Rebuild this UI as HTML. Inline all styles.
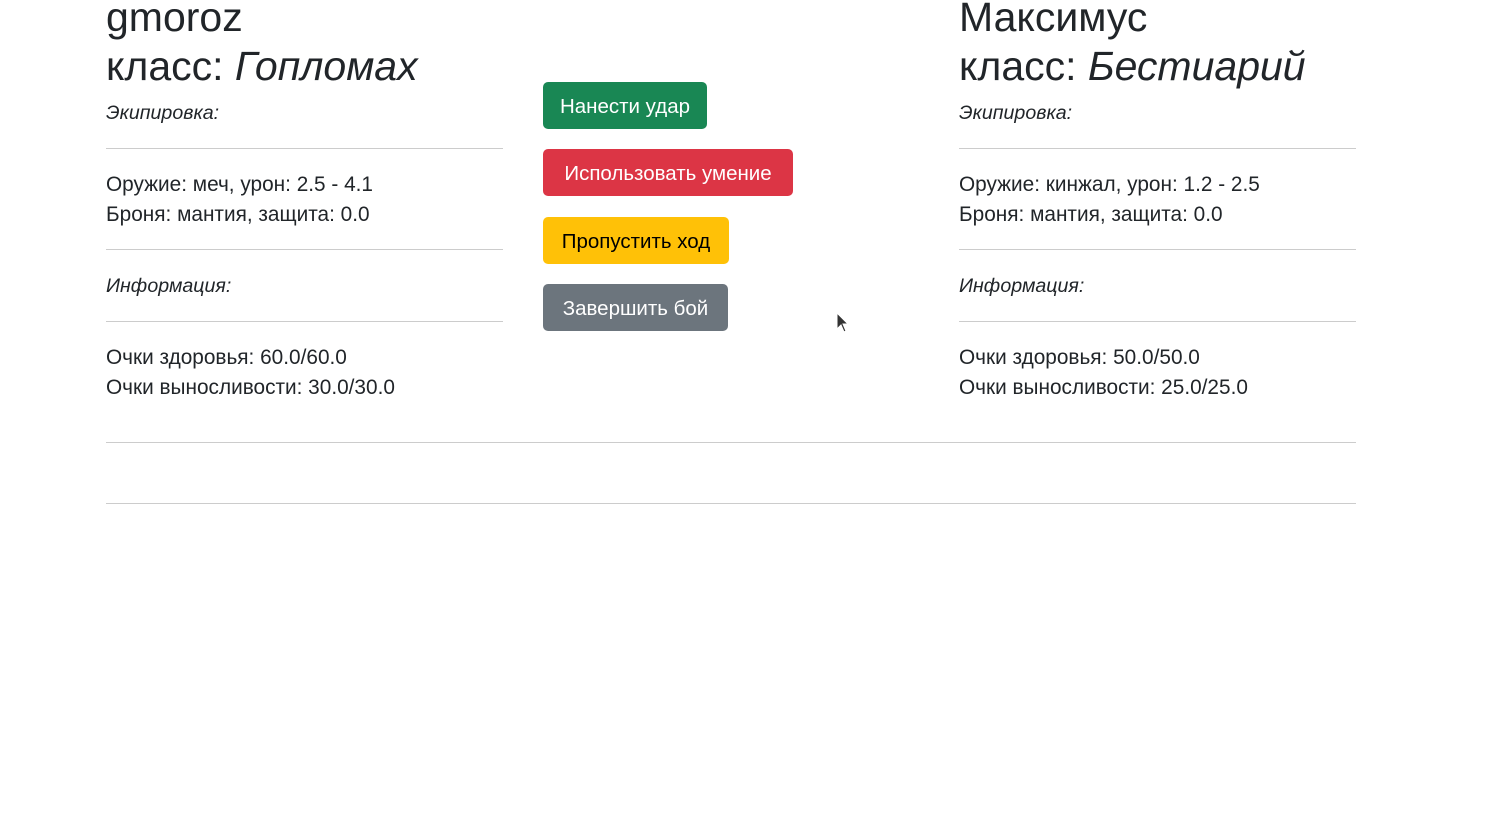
<!DOCTYPE html>
<html><head><meta charset="utf-8"><style>
body{margin:0;width:1507px;height:835px;background:#fff;font-family:"Liberation Sans","DejaVu Sans",sans-serif;color:#212529;position:relative;overflow:hidden}
.a{position:absolute;white-space:nowrap}
.h{font-size:41px;line-height:40px}
.i{font-style:italic;font-size:19.6px}
.t{font-size:20.8px}
hr{position:absolute;margin:0;border:0;border-top:1px solid #ccc;height:0}
.b{position:absolute;left:543px;height:47px;border-radius:5px;color:#fff;font-size:20.5px;line-height:49px;text-align:center}
</style></head><body>
<div class="a h" style="left:106px;top:-3px">gmoroz</div>
<div class="a h" style="left:106px;top:46px">класс: <i>Гопломах</i></div>
<div class="a i" style="left:106px;top:102px">Экипировка:</div>
<hr style="left:106px;width:397px;top:148px">
<div class="a t" style="left:106px;top:173px">Оружие: меч, урон: 2.5 - 4.1</div>
<div class="a t" style="left:106px;top:203px">Броня: мантия, защита: 0.0</div>
<hr style="left:106px;width:397px;top:249px">
<div class="a i" style="left:106px;top:275px">Информация:</div>
<hr style="left:106px;width:397px;top:321px">
<div class="a t" style="left:106px;top:346px">Очки здоровья: 60.0/60.0</div>
<div class="a t" style="left:106px;top:376px">Очки выносливости: 30.0/30.0</div>

<div class="a h" style="left:959px;top:-3px">Максимус</div>
<div class="a h" style="left:959px;top:46px">класс: <i>Бестиарий</i></div>
<div class="a i" style="left:959px;top:102px">Экипировка:</div>
<hr style="left:959px;width:397px;top:148px">
<div class="a t" style="left:959px;top:173px">Оружие: кинжал, урон: 1.2 - 2.5</div>
<div class="a t" style="left:959px;top:203px">Броня: мантия, защита: 0.0</div>
<hr style="left:959px;width:397px;top:249px">
<div class="a i" style="left:959px;top:275px">Информация:</div>
<hr style="left:959px;width:397px;top:321px">
<div class="a t" style="left:959px;top:346px">Очки здоровья: 50.0/50.0</div>
<div class="a t" style="left:959px;top:376px">Очки выносливости: 25.0/25.0</div>

<div class="b" style="top:82px;width:164px;background:#198754">Нанести удар</div>
<div class="b" style="top:149px;width:250px;background:#dc3545">Использовать умение</div>
<div class="b" style="top:217px;width:186px;background:#ffc107;color:#000">Пропустить ход</div>
<div class="b" style="top:284px;width:185px;background:#6c757d">Завершить бой</div>

<hr style="left:106px;width:1250px;top:442px">
<hr style="left:106px;width:1250px;top:503px">
<svg class="a" style="left:836px;top:312px" width="14" height="22" viewBox="0 0 14 22"><path d="M1 1 L1 17 L5 13 L8 20 L10 19 L7 12 L12 12 Z" fill="#333" stroke="#fff" stroke-width="1"/></svg>
</body></html>
